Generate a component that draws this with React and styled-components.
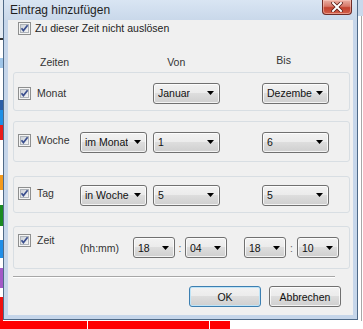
import React from "react";
import styled, { createGlobalStyle } from "styled-components";

const Global = createGlobalStyle`
  html, body { margin: 0; padding: 0; background: #ffffff; }
  body { font-family: "Liberation Sans", Arial, sans-serif; }
  * { box-sizing: border-box; }
`;

const Page = styled.div`
  width: 363px;
  height: 329px;
  overflow: hidden;
  display: flex;
  flex-direction: column;
  background: #ffffff;
`;

const Upper = styled.div`
  display: flex;
  height: 321px;
`;

const LeftStrip = styled.div`
  width: 3px;
  display: flex;
  flex-direction: column;
  background: #ffffff;
`;

const StripCell = styled.div`
  height: ${(p) => p.$h}px;
  background: ${(p) => p.$c};
`;

const RightStrip = styled.div`
  flex: 1;
  display: flex;
  flex-direction: column;
  background: #ffffff;
`;

const RightTop = styled.div`
  height: 16px;
  background: #c9d9ec;
`;

const RightLine = styled.div`
  flex: 1;
  margin-left: 3px;
  border-left: 1px solid #a8a8a8;
`;

const Dialog = styled.div`
  width: 355px;
  height: 320px;
  display: flex;
  flex-direction: column;
  border: 1px solid #4f6a88;
  border-top: none;
  background: #c6d6ea;
  padding: 0 4px 4px;
`;

const TitleBar = styled.div`
  height: 20px;
  display: flex;
  justify-content: space-between;
  align-items: flex-start;
  background: linear-gradient(#d9e5f3, #c9d8ea);
  margin: 0 -4px;
  padding: 0 4px 0 6px;
`;

const TitleText = styled.span`
  font-size: 12px;
  line-height: 20px;
  color: #1e1e1e;
`;

const CloseButton = styled.div`
  width: 30px;
  height: 15px;
  margin-right: 1px;
  display: flex;
  align-items: center;
  justify-content: center;
  border: 1px solid #6e2b26;
  border-top: none;
  border-radius: 0 0 4px 4px;
  background: linear-gradient(#eab0a4 0%, #d77869 45%, #c2422f 55%, #d2604a 100%);
  box-shadow: inset 0 0 0 1px rgba(255, 210, 200, 0.5);
`;

const Client = styled.div`
  flex: 1;
  background: #f0f0f0;
  display: flex;
  flex-direction: column;
  padding: 2px 3px 0 5px;
  font-size: 10.5px;
  color: #222;
`;

const CheckLabel = styled.div`
  display: flex;
  align-items: center;
  gap: ${(p) => p.$gap || 6}px;
  width: ${(p) => (p.$w ? `${p.$w}px` : "auto")};
  margin-left: ${(p) => p.$ml || 0}px;
  margin-bottom: ${(p) => p.$mb || 0}px;
  flex-shrink: 0;
  line-height: 13px;
  color: ${(p) => p.$color || "#333"};
`;

const Headers = styled.div`
  display: flex;
  align-items: flex-start;
  height: 12px;
  margin-top: 21px;
  line-height: 12px;
  color: #333;
`;

const HeaderText = styled.span`
  margin-left: ${(p) => p.$ml}px;
  margin-top: ${(p) => p.$mt || 0}px;
`;

const GroupBox = styled.div`
  height: ${(p) => p.$h}px;
  margin-top: ${(p) => p.$mt}px;
  border: 1px solid #d8dee3;
  border-radius: 3px;
  padding: ${(p) => p.$pt || 0}px 0 0 4px;
  display: flex;
  align-items: center;
`;

const Spacer = styled.div`
  width: ${(p) => p.$w}px;
  flex-shrink: 0;
`;

const Hint = styled.span`
  width: 53px;
  flex-shrink: 0;
  color: #333;
`;

const Colon = styled.span`
  width: ${(p) => p.$w}px;
  flex-shrink: 0;
  text-align: center;
  color: #666;
`;

const Combo = styled.div`
  width: ${(p) => p.$w || 67}px;
  height: 21px;
  flex-shrink: 0;
  margin-left: ${(p) => p.$ml || 0}px;
  display: flex;
  align-items: center;
  justify-content: space-between;
  padding: 0 5px 0 4px;
  border: 1px solid #707070;
  border-radius: 3px;
  background: linear-gradient(#f2f2f2 0%, #ebebeb 49%, #dddddd 50%, #cfcfcf 100%);
  box-shadow: inset 0 0 0 1px rgba(255, 255, 255, 0.75);
  color: #111;
  white-space: nowrap;
  overflow: hidden;
`;

const ComboText = styled.span`
  overflow: hidden;
`;

const Separator = styled.div`
  margin-top: 7px;
  margin-right: 15px;
  height: 2px;
  border-top: 1px solid #a7a7a7;
  border-bottom: 1px solid #ffffff;
`;

const ButtonRow = styled.div`
  display: flex;
  justify-content: flex-end;
  gap: 8px;
  margin-top: 8px;
  margin-right: 9px;
`;

const Button = styled.div`
  width: 72px;
  height: 21px;
  display: flex;
  align-items: center;
  justify-content: center;
  border: 1px solid ${(p) => (p.$default ? "#3c7fb1" : "#707070")};
  border-radius: 3px;
  background: linear-gradient(#f2f2f2 0%, #ebebeb 49%, #dddddd 50%, #cfcfcf 100%);
  box-shadow: inset 0 0 0 1px ${(p) => (p.$default ? "#bfe4f7" : "rgba(255,255,255,0.75)")};
  color: #111;
`;

const BottomRow = styled.div`
  height: 8px;
  display: flex;
`;

const BottomCell = styled.div`
  width: ${(p) => p.$w}px;
  background: ${(p) => p.$c};
  border-right: ${(p) => (p.$sep ? "1px solid #ffffff" : "none")};
  font-size: 10px;
  line-height: 12px;
  padding-left: 4px;
  overflow: hidden;
  color: #000;
`;

const CheckBox = () => (
  <svg width="13" height="13" viewBox="0 0 13 13" style={{ flexShrink: 0 }}>
    <defs>
      <linearGradient id="cbg" x1="0" y1="0" x2="1" y2="1">
        <stop offset="0" stopColor="#cbcfd5" />
        <stop offset="1" stopColor="#f7f7f7" />
      </linearGradient>
    </defs>
    <rect x="0.5" y="0.5" width="12" height="12" fill="#f4f4f4" stroke="#8e8f8f" />
    <rect x="2.5" y="2.5" width="8" height="8" fill="url(#cbg)" stroke="#aeb3b9" />
    <path d="M3.5 6.2 L5.4 8.6 L9.6 3.2" fill="none" stroke="#3b4f8e" strokeWidth="1.7" />
  </svg>
);

const Arrow = () => (
  <svg width="7" height="4" viewBox="0 0 7 4" style={{ flexShrink: 0 }}>
    <path d="M0 0 H7 L3.5 4 Z" fill="#000" />
  </svg>
);

const CloseX = () => (
  <svg width="12" height="10" viewBox="0 0 12 10">
    <path d="M2 1 L10 9 M10 1 L2 9" stroke="#5a1e18" strokeWidth="3.6" strokeLinecap="square" />
    <path d="M2 1 L10 9 M10 1 L2 9" stroke="#ffffff" strokeWidth="2" strokeLinecap="square" />
  </svg>
);

const Drop = ({ w, ml, children }) => (
  <Combo $w={w} $ml={ml}>
    <ComboText>{children}</ComboText>
    <Arrow />
  </Combo>
);

const strip = [
  ["#e4ebf3", 38], ["#333", 2], ["#fff", 18], ["#9fc5e8", 10], ["#fff", 32],
  ["#2b5fa8", 10], ["#1e8fe6", 15], ["#e81c1c", 15], ["#fff", 35], ["#f39a1e", 15],
  ["#fff", 15], ["#1a8a22", 21], ["#fff", 14], ["#1f8ee8", 18], ["#fff", 10],
  ["#a35ac7", 20], ["#fff", 9], ["#ee1111", 24],
];

export default function App() {
  return (
    <Page>
      <Global />
      <Upper>
        <LeftStrip>
          {strip.map(([c, h], i) => (
            <StripCell key={i} $c={c} $h={h} />
          ))}
        </LeftStrip>
        <Dialog>
          <TitleBar>
            <TitleText>Eintrag hinzufügen</TitleText>
            <CloseButton>
              <CloseX />
            </CloseButton>
          </TitleBar>
          <Client>
            <CheckLabel $ml={5} $gap={4} $color="#222">
              <CheckBox />
              <span>Zu dieser Zeit nicht auslösen</span>
            </CheckLabel>
            <Headers>
              <HeaderText $ml={27}>Zeiten</HeaderText>
              <HeaderText $ml={98}>Von</HeaderText>
              <HeaderText $ml={91} $mt={-2}>Bis</HeaderText>
            </Headers>

            <GroupBox $h={39} $mt={4} $pt={3}>
              <CheckLabel $w={62}>
                <CheckBox />
                <span>Monat</span>
              </CheckLabel>
              <Spacer $w={73} />
              <Drop>Januar</Drop>
              <Drop ml={42}>Dezembe</Drop>
            </GroupBox>

            <GroupBox $h={41} $mt={10} $pt={1}>
              <CheckLabel $w={62} $mb={3}>
                <CheckBox />
                <span>Woche</span>
              </CheckLabel>
              <Drop>im Monat</Drop>
              <Drop ml={6}>1</Drop>
              <Drop ml={42}>6</Drop>
            </GroupBox>

            <GroupBox $h={37} $mt={14} $pt={1}>
              <CheckLabel $w={62} $mb={4}>
                <CheckBox />
                <span>Tag</span>
              </CheckLabel>
              <Drop>in Woche</Drop>
              <Drop ml={6}>5</Drop>
              <Drop ml={42}>5</Drop>
            </GroupBox>

            <GroupBox $h={43} $mt={13} $pt={0}>
              <CheckLabel $w={62} $mb={14}>
                <CheckBox />
                <span>Zeit</span>
              </CheckLabel>
              <Hint>(hh:mm)</Hint>
              <Drop w={42}>18</Drop>
              <Colon $w={10}>:</Colon>
              <Drop w={42}>04</Drop>
              <Drop w={42} ml={17}>18</Drop>
              <Colon $w={11}>:</Colon>
              <Drop w={42}>10</Drop>
            </GroupBox>

            <Separator />
            <ButtonRow>
              <Button $default>OK</Button>
              <Button>Abbrechen</Button>
            </ButtonRow>
          </Client>
        </Dialog>
        <RightStrip>
          <RightTop />
          <RightLine />
        </RightStrip>
      </Upper>
      <BottomRow>
        <BottomCell $w={88} $c="#ff0000" $sep />
        <BottomCell $w={122} $c="#ff0000" $sep />
        <BottomCell $w={20} $c="#ff0000" />
      </BottomRow>
    </Page>
  );
}
